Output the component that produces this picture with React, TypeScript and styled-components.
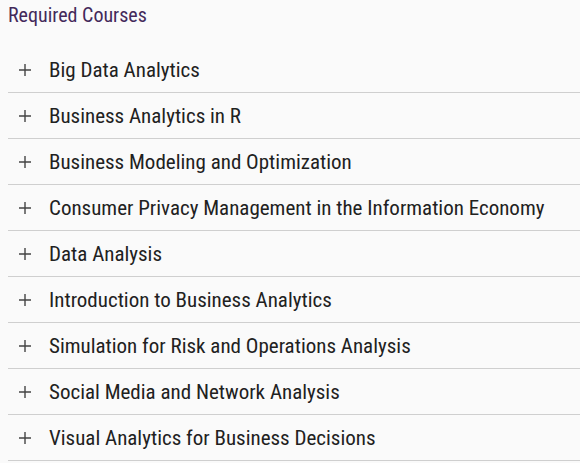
import styled, { createGlobalStyle } from "styled-components";

const GlobalStyle = createGlobalStyle`
  html, body {
    margin: 0;
    padding: 0;
    background: #fafafa;
  }
  body {
    font-family: Roboto, "Liberation Sans", Arial, sans-serif;
  }
`;

const Wrapper = styled.div`
  padding: 4px 0 0 8px;
`;

const Title = styled.h2`
  margin: 0;
  font-size: 20px;
  font-stretch: condensed;
  font-weight: 400;
  line-height: 22px;
  color: #43295a;
`;

const List = styled.ul`
  list-style: none;
  margin: 21px 0 0;
  padding: 0;
`;

const Row = styled.li`
  height: 45px;
  display: flex;
  align-items: center;
  border-bottom: 1px solid #cfcfcf;
  cursor: pointer;
`;

const PlusIcon = styled.svg`
  width: 12px;
  height: 12px;
  margin: 0 18px 0 11px;
  flex-shrink: 0;
`;

const Label = styled.span`
  font-size: 21px;
  font-stretch: condensed;
  color: #212121;
  white-space: nowrap;
`;

const courses = [
  "Big Data Analytics",
  "Business Analytics in R",
  "Business Modeling and Optimization",
  "Consumer Privacy Management in the Information Economy",
  "Data Analysis",
  "Introduction to Business Analytics",
  "Simulation for Risk and Operations Analysis",
  "Social Media and Network Analysis",
  "Visual Analytics for Business Decisions",
];

export default function App() {
  return (
    <Wrapper>
      <GlobalStyle />
      <Title>Required Courses</Title>
      <List>
        {courses.map((course) => (
          <Row key={course}>
            <PlusIcon viewBox="0 0 12 12">
              <path d="M6 0v12M0 6h12" stroke="#444" strokeWidth="1.4" fill="none" />
            </PlusIcon>
            <Label>{course}</Label>
          </Row>
        ))}
      </List>
    </Wrapper>
  );
}
